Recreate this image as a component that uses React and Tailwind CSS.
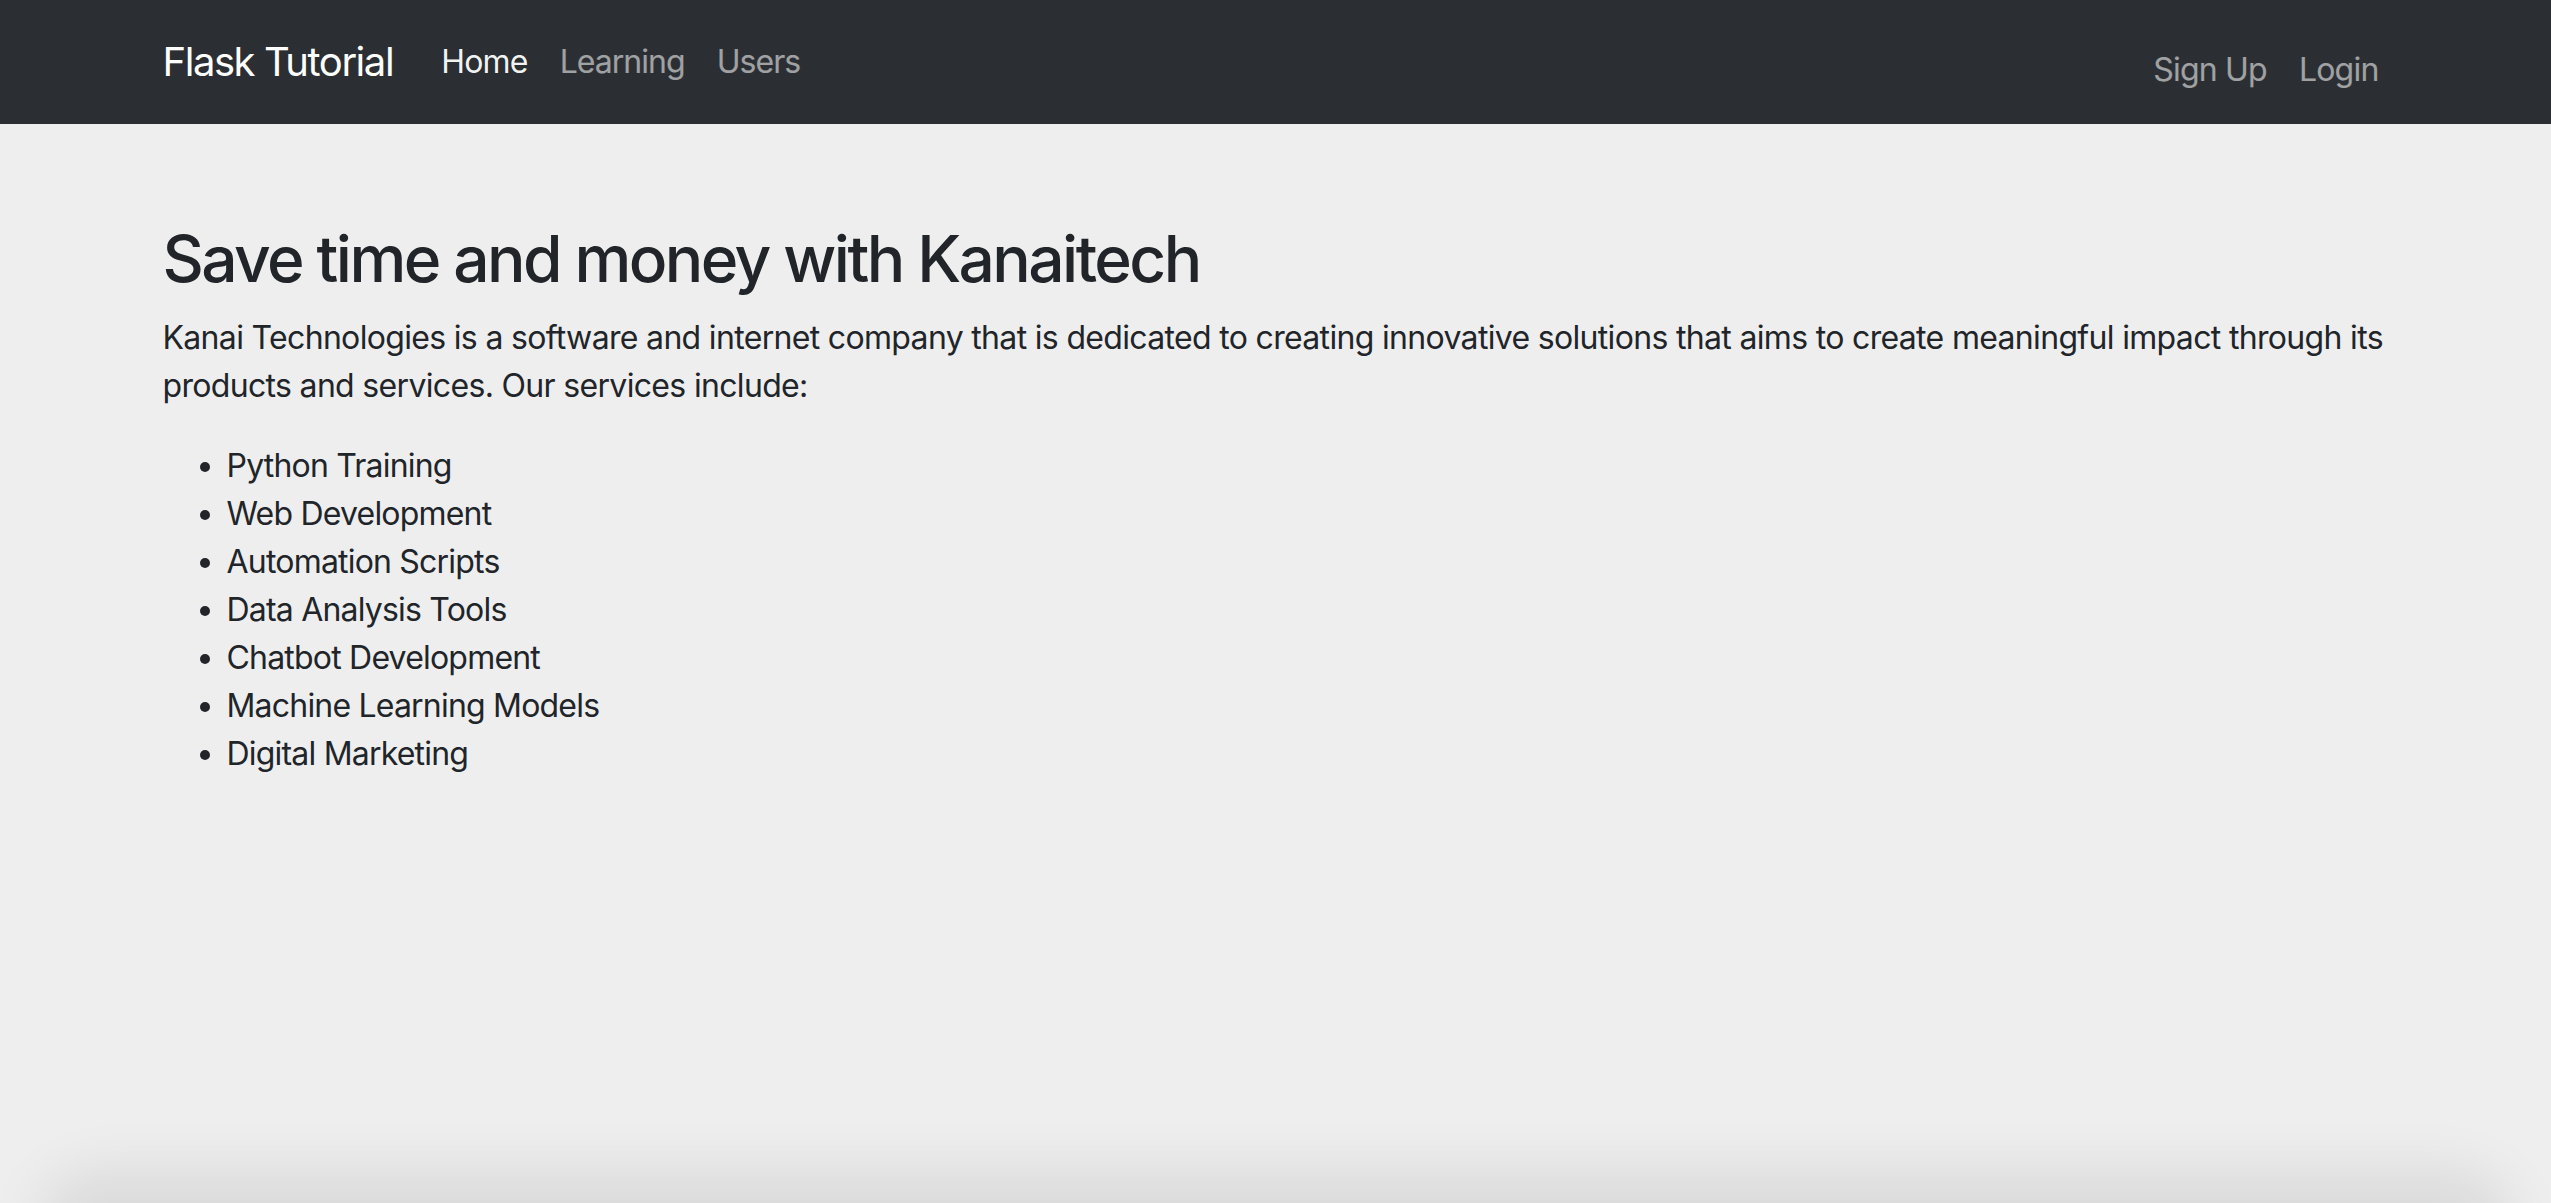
const SERVICES = [
  'Python Training',
  'Web Development',
  'Automation Scripts',
  'Data Analysis Tools',
  'Chatbot Development',
  'Machine Learning Models',
  'Digital Marketing',
]

export default function App() {
  return (
    <div className="relative min-h-screen overflow-hidden bg-[#eeeeee] font-['Inter','Noto_Sans',sans-serif] text-[#212529]">
      <nav className="h-[124px] bg-[#2b2f33]">
        <div className="mx-auto flex h-full w-[2280px] items-start justify-between pl-[27px] pr-[21px]">
          <div className="flex h-[124px] items-center">
            <a className="mr-8 text-[40px] leading-[60px] tracking-[-0.036em] text-white">Flask Tutorial</a>
            <a className="px-4 text-[32px] leading-[48px] tracking-[-0.025em] text-white/95">Home</a>
            <a className="px-4 text-[32px] leading-[48px] tracking-[-0.03em] text-white/55">Learning</a>
            <a className="px-4 text-[32px] leading-[48px] tracking-[-0.03em] text-white/55">Users</a>
          </div>
          <div className="mt-[14px] flex h-[112px] items-center">
            <a className="px-4 text-[32px] leading-[48px] tracking-[-0.025em] text-white/55">Sign Up</a>
            <a className="px-4 text-[32px] leading-[48px] tracking-[-0.025em] text-white/55">Login</a>
          </div>
        </div>
      </nav>

      <main className="mx-auto w-[2280px] pl-[27px] pr-6 pt-[97px]">
        <h1 className="mb-4 text-[64px] font-medium leading-[1.2] tracking-[-0.04em]">Save time and money with Kanaitech</h1>
        <p className="mb-8 text-[32px] leading-[48px] tracking-[-0.021em]">
          Kanai Technologies is a software and internet company that is dedicated to creating innovative solutions that aims to create meaningful impact through its products and services. Our services include:
        </p>
        <ul className="list-disc pl-16 text-[32px] leading-[48px] tracking-[-0.025em]">
          {SERVICES.map((s) => (
            <li key={s}>{s}</li>
          ))}
        </ul>
      </main>

      {/* window shadow along the bottom edge */}
      <div className="pointer-events-none absolute bottom-[-50px] left-[70px] right-[70px] h-[50px] rounded-[40px] bg-black/10 shadow-[0_0_60px_30px_rgba(0,0,0,0.09)]" />
    </div>
  )
}
